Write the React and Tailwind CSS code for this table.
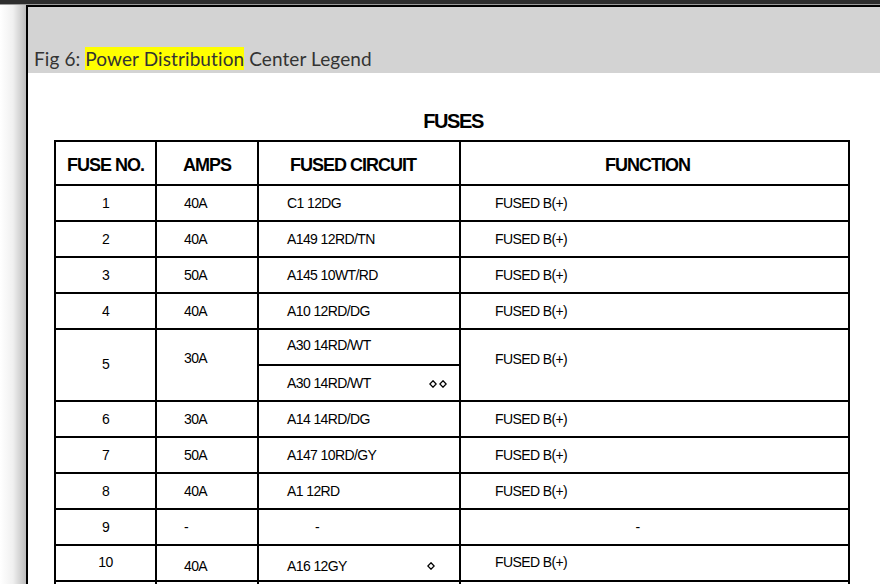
import React from "react";

function Diamond() {
  return (
    <svg width="8" height="8" viewBox="0 0 8 8" className="inline-block">
      <path d="M4 0.8 L7.2 4 L4 7.2 L0.8 4 Z" fill="none" stroke="#000" strokeWidth="1.3" />
    </svg>
  );
}

const rows = [
  ["1", "40A", "C1 12DG", "FUSED B(+)"],
  ["2", "40A", "A149 12RD/TN", "FUSED B(+)"],
  ["3", "50A", "A145 10WT/RD", "FUSED B(+)"],
  ["4", "40A", "A10 12RD/DG", "FUSED B(+)"],
];
const rows2 = [
  ["6", "30A", "A14 14RD/DG", "FUSED B(+)"],
  ["7", "50A", "A147 10RD/GY", "FUSED B(+)"],
  ["8", "40A", "A1 12RD", "FUSED B(+)"],
];

const td = "border-2 border-black p-0 align-middle";

function Row({ r }) {
  return (
    <tr className="h-[36px]">
      <td className={td + " text-center"}>{r[0]}</td>
      <td className={td + " pl-[27px]"}>{r[1]}</td>
      <td className={td + " pl-[28px]"}>{r[2]}</td>
      <td className={td + " pl-[34px]"}>{r[3]}</td>
    </tr>
  );
}

export default function App() {
  return (
    <div className="w-[880px] h-[584px] overflow-hidden bg-white flex flex-col">
      <div className="h-[4px] bg-[#2d2d2d] shrink-0" />
      <div className="h-[1px] bg-[#9a9a9a] shrink-0" />
      <div className="flex flex-1 min-h-0">
        <div className="w-[26px] shrink-0 bg-gradient-to-r from-white via-[#f0f0f0] to-[#bdbdbd]" />
        <div className="flex-1 border-l-2 border-t-2 border-black flex flex-col min-h-0">
          <div className="h-[66px] bg-[#d3d3d3] flex items-end pl-[6px] shrink-0">
            <div
              className="text-[19px] leading-[29px] text-[#333] tracking-[0.1px] [font-variant-ligatures:none]"
              style={{ fontFamily: "Lato, 'Noto Sans', sans-serif" }}
            >
              Fig 6: <span className="bg-[#ffff00]">Power Distribution</span> Center Legend
            </div>
          </div>
          <div
            className="ml-[26px] w-[794px] text-black"
            style={{ fontFamily: "'Liberation Sans', Arial, sans-serif" }}
          >
            <div className="mt-[36px] h-[24px] leading-[24px] text-center font-bold text-[20px] tracking-[-1.4px] pl-[4px]">
              FUSES
            </div>
            <table className="mt-[7px] w-[794px] table-fixed border-collapse text-[14px] tracking-[-0.6px]">
              <colgroup>
                <col className="w-[101px]" />
                <col className="w-[102px]" />
                <col className="w-[202px]" />
                <col className="w-[389px]" />
              </colgroup>
              <tbody>
                <tr className="h-[44px] font-bold text-[18px] tracking-[-1px]">
                  <td className={td + " text-center pt-[5px]"}>FUSE NO.</td>
                  <td className={td + " text-center pt-[5px]"}>AMPS</td>
                  <td className={td + " text-center pr-[12px] pt-[5px]"}>FUSED CIRCUIT</td>
                  <td className={td + " text-center pr-[14px] pt-[5px]"}>FUNCTION</td>
                </tr>
                {rows.map((r) => (
                  <Row key={r[0]} r={r} />
                ))}
                <tr className="h-[36px]">
                  <td rowSpan={2} className={td + " text-center pb-[2px]"}>5</td>
                  <td rowSpan={2} className={td + " pl-[27px] pb-[14px]"}>30A</td>
                  <td className={td + " pl-[28px] pb-[4px]"}>A30 14RD/WT</td>
                  <td rowSpan={2} className={td + " pl-[34px] pb-[12px]"}>FUSED B(+)</td>
                </tr>
                <tr className="h-[36px]">
                  <td className={td + " pl-[28px]"}>
                    <div className="flex items-center justify-between pr-[12px]">
                      <span>A30 14RD/WT</span>
                      <span className="flex gap-[2px] pt-[2px]">
                        <Diamond />
                        <Diamond />
                      </span>
                    </div>
                  </td>
                </tr>
                {rows2.map((r) => (
                  <Row key={r[0]} r={r} />
                ))}
                <tr className="h-[36px]">
                  <td className={td + " text-center"}>9</td>
                  <td className={td + " pl-[27px]"}>-</td>
                  <td className={td + " pl-[56px]"}>-</td>
                  <td className={td + " text-center pr-[34px]"}>-</td>
                </tr>
                <tr className="h-[36px]">
                  <td className={td + " text-center pb-[2px]"}>10</td>
                  <td className={td + " pl-[27px] pt-[6px]"}>40A</td>
                  <td className={td + " pl-[28px] pt-[6px]"}>
                    <div className="flex items-center">
                      <span className="w-[140px]">A16 12GY</span>
                      <Diamond />
                    </div>
                  </td>
                  <td className={td + " pl-[34px] pb-[2px]"}>FUSED B(+)</td>
                </tr>
                <tr className="h-[36px]">
                  <td className={td}></td>
                  <td className={td}></td>
                  <td className={td}></td>
                  <td className={td}></td>
                </tr>
              </tbody>
            </table>
          </div>
        </div>
      </div>
    </div>
  );
}
